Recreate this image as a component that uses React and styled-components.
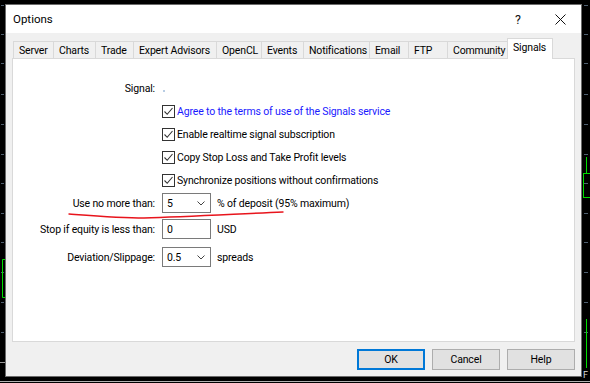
import React from "react";
import styled, { createGlobalStyle } from "styled-components";

const GlobalStyle = createGlobalStyle`
  html, body { margin: 0; padding: 0; background: #000; }
  body {
    font-family: Roboto, "Liberation Sans", Arial, sans-serif;
    font-size: 10.5px;
    letter-spacing: -0.15px;
    color: #000;
  }
  * { box-sizing: border-box; }
`;

const Screen = styled.div`
  position: relative;
  width: 590px;
  height: 383px;
  overflow: hidden;
  background: #000;
  padding: 4px 0 0 5px;
`;

const ChartLayer = styled.svg`
  position: absolute;
  left: 0;
  top: 0;
  width: 590px;
  height: 383px;
  z-index: 0;
`;

const Dialog = styled.div`
  position: relative;
  z-index: 1;
  width: 577px;
  height: 373px;
  background: #f0f0f0;
  border: 1px solid #6b6b6b;
  display: flex;
  flex-direction: column;
`;

const TitleBar = styled.div`
  height: 28px;
  flex: none;
  background: #fff;
  display: flex;
  align-items: center;
  padding-left: 7px;
`;

const Title = styled.span`
  font-size: 11.5px;
  letter-spacing: 0;
  color: #000;
`;

const CaptionButton = styled.div`
  width: 42px;
  height: 28px;
  display: flex;
  align-items: center;
  justify-content: center;
  font-size: 12.5px;
  color: #111;
  margin-left: ${(p) => (p.$first ? "auto" : "0")};
`;

const Body = styled.div`
  flex: 1;
  display: flex;
  flex-direction: column;
  padding: 5px 6px 0 6px;
`;

const TabStrip = styled.div`
  position: relative;
  z-index: 2;
  height: 21px;
  margin-bottom: -1px;
  display: flex;
  align-items: flex-end;
  padding-left: 1px;
`;

const Tab = styled.div`
  width: ${(p) => p.$w}px;
  height: ${(p) => (p.$active ? 21 : 18)}px;
  margin-left: ${(p) => (p.$first ? 0 : -1)}px;
  border: 1px solid #d9d9d9;
  border-bottom: ${(p) => (p.$active ? "none" : "1px solid #d9d9d9")};
  background: ${(p) => (p.$active ? "#fff" : "#f0f0f0")};
  display: flex;
  align-items: center;
  padding: ${(p) => (p.$active ? "0 0 3px 5px" : "0 0 0 5px")};
  white-space: nowrap;
  color: #000;
  position: relative;
  z-index: ${(p) => (p.$active ? 2 : 1)};
`;

const Panel = styled.div`
  height: 284px;
  flex: none;
  background: #fff;
  border: 1px solid #d9d9d9;
  padding-top: 18px;
  display: flex;
  flex-direction: column;
`;

const Row = styled.div`
  height: 23px;
  display: flex;
  align-items: center;
  padding-left: ${(p) => p.$indent || 0}px;
`;

const Label = styled.span`
  width: 142px;
  text-align: right;
  white-space: nowrap;
  flex: none;
`;

const Dot = styled.span`
  width: 2px;
  height: 2px;
  margin-left: 8px;
  margin-top: 4px;
  background: #b8cde4;
`;

const CheckBox = styled.span`
  width: 13px;
  height: 13px;
  flex: none;
  border: 1px solid #333;
  background: #fff;
  display: flex;
  align-items: center;
  justify-content: center;
`;

const CheckText = styled.span`
  margin-left: 2px;
  white-space: nowrap;
  color: ${(p) => (p.$link ? "#1a1aff" : "#000")};
`;

const Fields = styled.div`
  display: flex;
  flex-direction: column;
  margin-top: 1px;
`;

const FieldRow = styled.div`
  display: flex;
  align-items: center;
  height: 20px;
  margin-top: ${(p) => p.$mt || 0}px;
`;

const Control = styled.div`
  width: 49px;
  height: 20px;
  margin-left: 7px;
  border: 1px solid #7a7a7a;
  background: #fff;
  display: flex;
  align-items: center;
  justify-content: space-between;
  padding: 0 5px 0 4px;
  flex: none;
`;

const Suffix = styled.span`
  margin-left: 6px;
  white-space: nowrap;
`;

const ButtonRow = styled.div`
  flex: 1;
  display: flex;
  justify-content: flex-end;
  align-items: flex-start;
  gap: 7px;
  padding-top: 7px;
`;

const Button = styled.div`
  width: 68px;
  height: 21px;
  background: #e1e1e1;
  border: 1px solid ${(p) => (p.$default ? "#0078d7" : "#adadad")};
  box-shadow: ${(p) => (p.$default ? "inset 0 0 0 1px #0078d7" : "none")};
  display: flex;
  align-items: center;
  justify-content: center;
  color: #000;
`;

const Annotation = styled.svg`
  position: absolute;
  left: 0;
  top: 0;
  width: 577px;
  height: 373px;
  pointer-events: none;
  z-index: 5;
`;

const Chevron = () => (
  <svg width="8" height="5" viewBox="0 0 8 5">
    <path d="M0.5 0.5 L4 4 L7.5 0.5" fill="none" stroke="#444" strokeWidth="1" />
  </svg>
);

const Check = () => (
  <svg width="11" height="11" viewBox="0 0 11 11">
    <path d="M1.5 5.5 L4.2 8.3 L9.5 2" fill="none" stroke="#333" strokeWidth="1.1" />
  </svg>
);

const CloseIcon = () => (
  <svg width="11" height="11" viewBox="0 0 11 11">
    <path d="M0.5 0.5 L10.5 10.5 M10.5 0.5 L0.5 10.5" stroke="#111" strokeWidth="1" />
  </svg>
);

const tabs = [
  ["Server", 41],
  ["Charts", 43],
  ["Trade", 39],
  ["Expert Advisors", 84],
  ["OpenCL", 46],
  ["Events", 43],
  ["Notifications", 67],
  ["Email", 40],
  ["FTP", 40],
  ["Community", 61],
  ["Signals", 46, true],
];

const checks = [
  ["Agree to the terms of use of the Signals service", true],
  ["Enable realtime signal subscription"],
  ["Copy Stop Loss and Take Profit levels"],
  ["Synchronize positions without confirmations"],
];

const ticks = [5, 34, 63, 94, 124, 154, 183, 213, 242, 272, 302, 332];

export default function App() {
  return (
    <>
      <GlobalStyle />
      <Screen>
        <ChartLayer viewBox="0 0 590 383">
          {ticks.map((y) => (
            <g key={y} stroke="#4f5f6f" strokeWidth="1">
              <line x1="1" y1={y + 0.5} x2="4" y2={y + 0.5} />
              <line x1="584" y1={y + 0.5} x2="588" y2={y + 0.5} />
            </g>
          ))}
          <g stroke="#00dd00" strokeWidth="1" fill="none">
            <path d="M5 259.5 H2.5 V297.5 H5" />
            <path d="M586.5 157 V173" />
            <rect x="583.5" y="173.5" width="8" height="24" />
            <path d="M586.5 319 V368" />
          </g>
          <line x1="0" y1="362.5" x2="5" y2="362.5" stroke="#9a9a9a" />
          <line x1="0" y1="381.5" x2="590" y2="381.5" stroke="#b0b0b0" />
          <text x="583" y="378" fill="#ddd" fontSize="9" fontFamily="Roboto, sans-serif">F</text>
        </ChartLayer>
        <Dialog>
          <TitleBar>
            <Title>Options</Title>
            <CaptionButton $first>?</CaptionButton>
            <CaptionButton>
              <CloseIcon />
            </CaptionButton>
          </TitleBar>
          <Body>
            <TabStrip>
              {tabs.map(([name, w, active], i) => (
                <Tab key={name} $w={w} $active={active} $first={i === 0}>
                  {name}
                </Tab>
              ))}
            </TabStrip>
            <Panel>
              <Row>
                <Label>Signal:</Label>
                <Dot />
              </Row>
              {checks.map(([text, link]) => (
                <Row key={text} $indent={149}>
                  <CheckBox>
                    <Check />
                  </CheckBox>
                  <CheckText $link={link}>{text}</CheckText>
                </Row>
              ))}
              <Fields>
                <FieldRow>
                  <Label>Use no more than:</Label>
                  <Control>
                    <span>5</span>
                    <Chevron />
                  </Control>
                  <Suffix>% of deposit (95% maximum)</Suffix>
                </FieldRow>
                <FieldRow $mt={6}>
                  <Label>Stop if equity is less than:</Label>
                  <Control>
                    <span>0</span>
                  </Control>
                  <Suffix>USD</Suffix>
                </FieldRow>
                <FieldRow $mt={8}>
                  <Label>Deviation/Slippage:</Label>
                  <Control>
                    <span>0.5</span>
                    <Chevron />
                  </Control>
                  <Suffix>spreads</Suffix>
                </FieldRow>
              </Fields>
            </Panel>
            <ButtonRow>
              <Button $default>OK</Button>
              <Button>Cancel</Button>
              <Button>Help</Button>
            </ButtonRow>
          </Body>
          <Annotation viewBox="0 0 577 373">
            <path
              d="M63 209 C 90 211 115 213 138 213 C 180 212 230 209 277 207"
              fill="none"
              stroke="#e8141c"
              strokeWidth="1.4"
              strokeLinecap="round"
            />
          </Annotation>
        </Dialog>
      </Screen>
    </>
  );
}
